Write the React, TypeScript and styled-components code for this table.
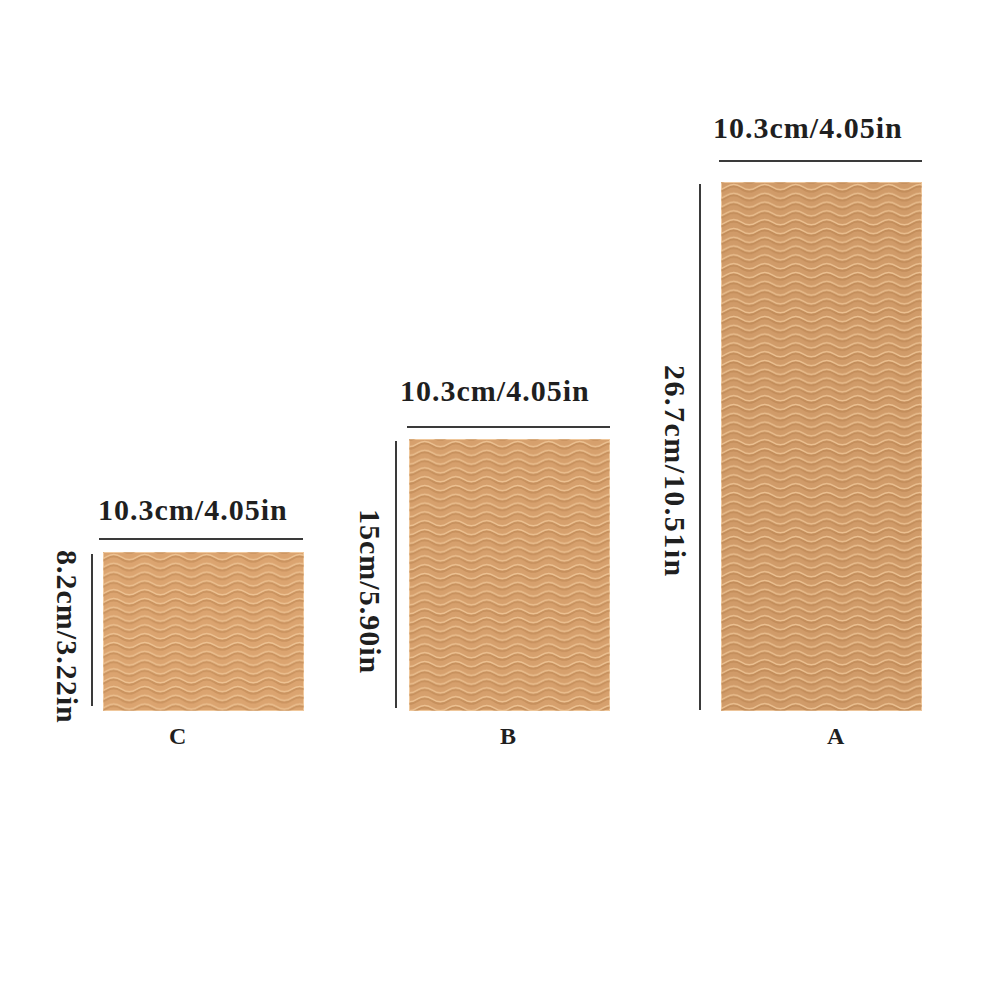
import React, { useId } from "react";
import styled, { createGlobalStyle } from "styled-components";

const GlobalStyle = createGlobalStyle`
  html, body { margin: 0; padding: 0; background: #fff; }
  body { font-family: "Liberation Serif", "Times New Roman", serif; color: #222; }
`;

const Stage = styled.div`
  width: 990px;
  height: 990px;
  box-sizing: border-box;
  display: flex;
  align-items: flex-end;
  padding: 0 0 241px 0;
  background: #fff;
`;

const Panel = styled.div<{ $offset: number }>`
  display: flex;
  flex-direction: column;
  align-items: flex-start;
  margin-left: ${(p) => p.$offset}px;
`;

const Label = styled.div<{ $indent: number }>`
  margin-left: ${(p) => p.$indent}px;
  font-size: 30px;
  line-height: 30px;
  font-weight: 700;
  letter-spacing: 1px;
  white-space: nowrap;
  color: #1f1f1f;
`;

const TopRule = styled.div<{ $indent: number; $width: number; $above: number; $below: number }>`
  margin: ${(p) => p.$above}px 0 ${(p) => p.$below}px ${(p) => p.$indent}px;
  width: ${(p) => p.$width}px;
  height: 2px;
  background: #3a3a3a;
`;

const Body = styled.div`
  display: flex;
  align-items: flex-start;
`;

const SideText = styled.div<{ $top: number; $spacing: number }>`
  writing-mode: vertical-rl;
  font-size: 30px;
  line-height: 24px;
  width: 24px;
  font-weight: 700;
  letter-spacing: ${(p) => p.$spacing}px;
  white-space: nowrap;
  color: #1f1f1f;
  margin-top: ${(p) => p.$top}px;
  margin-bottom: -40px;
`;

const SideRule = styled.div<{ $gap: number; $height: number }>`
  margin: 2px 0 0 ${(p) => p.$gap}px;
  width: 2px;
  height: ${(p) => p.$height}px;
  background: #3a3a3a;
`;

const Swatch = styled.div<{ $gap: number; $height: number; $tone: string }>`
  margin-left: ${(p) => p.$gap}px;
  width: 201px;
  height: ${(p) => p.$height}px;
  background: ${(p) => p.$tone};
  overflow: hidden;
  box-shadow: inset 0 0 0 1px rgba(250, 215, 175, 0.7);
  svg {
    display: block;
    width: 100%;
    height: 100%;
  }
`;

const Letter = styled.div<{ $indent: number }>`
  margin: 13px 0 0 ${(p) => p.$indent}px;
  font-size: 24px;
  line-height: 25px;
  font-weight: 700;
  color: #1f1f1f;
`;

const H = 8.8;

function wave(y: number, a: number) {
  return `M-31 ${y} Q-23.25 ${y - 2 * a} -15.5 ${y} T0 ${y} T15.5 ${y} T31 ${y} T46.5 ${y}`;
}

function Waves({ phase }: { phase: number }) {
  const id = "w" + useId().replace(/[^a-zA-Z0-9]/g, "");
  const rows = [-H, 0, H];
  return (
    <svg aria-hidden="true">
      <defs>
        <pattern id={id} width="31" height={H} patternUnits="userSpaceOnUse" x={phase} y="1">
          {rows.map((dy) => (
            <g key={dy}>
              <path d={wave(5.9 + dy, 2.6)} fill="none" stroke="#a8713f" strokeOpacity="0.35" strokeWidth="2.2" />
              <path d={wave(4 + dy, 2.6)} fill="none" stroke="#f2cb9c" strokeOpacity="0.8" strokeWidth="1.4" />
            </g>
          ))}
        </pattern>
      </defs>
      <rect width="100%" height="100%" fill={`url(#${id})`} />
    </svg>
  );
}

type Spec = {
  key: string;
  offset: number;
  width: string;
  height: string;
  labelIndent: number;
  ruleIndent: number;
  ruleWidth: number;
  ruleAbove: number;
  ruleBelow: number;
  sideTop: number;
  sideSpacing: number;
  sideGap: number;
  sideRule: number;
  swatchGap: number;
  swatchHeight: number;
  tone: string;
  phase: number;
  letterIndent: number;
};

const specs: Spec[] = [
  {
    key: "C",
    offset: 55,
    width: "10.3cm/4.05in",
    height: "8.2cm/3.22in",
    labelIndent: 43,
    ruleIndent: 44,
    ruleWidth: 204,
    ruleAbove: 13,
    ruleBelow: 12,
    sideTop: -2,
    sideSpacing: 1,
    sideGap: 12,
    sideRule: 152,
    swatchGap: 10,
    swatchHeight: 159,
    tone: "#dba470",
    phase: 3,
    letterIndent: 114,
  },
  {
    key: "B",
    offset: 54,
    width: "10.3cm/4.05in",
    height: "15cm/5.90in",
    labelIndent: 42,
    ruleIndent: 49,
    ruleWidth: 203,
    ruleAbove: 20,
    ruleBelow: 11,
    sideTop: 70,
    sideSpacing: 1,
    sideGap: 13,
    sideRule: 267,
    swatchGap: 12,
    swatchHeight: 272,
    tone: "#d6a06d",
    phase: 8,
    letterIndent: 142,
  },
  {
    key: "A",
    offset: 53,
    width: "10.3cm/4.05in",
    height: "26.7cm/10.51in",
    labelIndent: 50,
    ruleIndent: 56,
    ruleWidth: 203,
    ruleAbove: 17,
    ruleBelow: 20,
    sideTop: 183,
    sideSpacing: 1.5,
    sideGap: 12,
    sideRule: 526,
    swatchGap: 20,
    swatchHeight: 529,
    tone: "#d09b69",
    phase: 5,
    letterIndent: 164,
  },
];

export default function App() {
  return (
    <>
      <GlobalStyle />
      <Stage>
        {specs.map((s) => (
          <Panel key={s.key} $offset={s.offset}>
            <Label $indent={s.labelIndent}>{s.width}</Label>
            <TopRule $indent={s.ruleIndent} $width={s.ruleWidth} $above={s.ruleAbove} $below={s.ruleBelow} />
            <Body>
              <SideText $top={s.sideTop} $spacing={s.sideSpacing}>{s.height}</SideText>
              <SideRule $gap={s.sideGap} $height={s.sideRule} />
              <Swatch $gap={s.swatchGap} $height={s.swatchHeight} $tone={s.tone}>
                <Waves phase={s.phase} />
              </Swatch>
            </Body>
            <Letter $indent={s.letterIndent}>{s.key}</Letter>
          </Panel>
        ))}
      </Stage>
    </>
  );
}
